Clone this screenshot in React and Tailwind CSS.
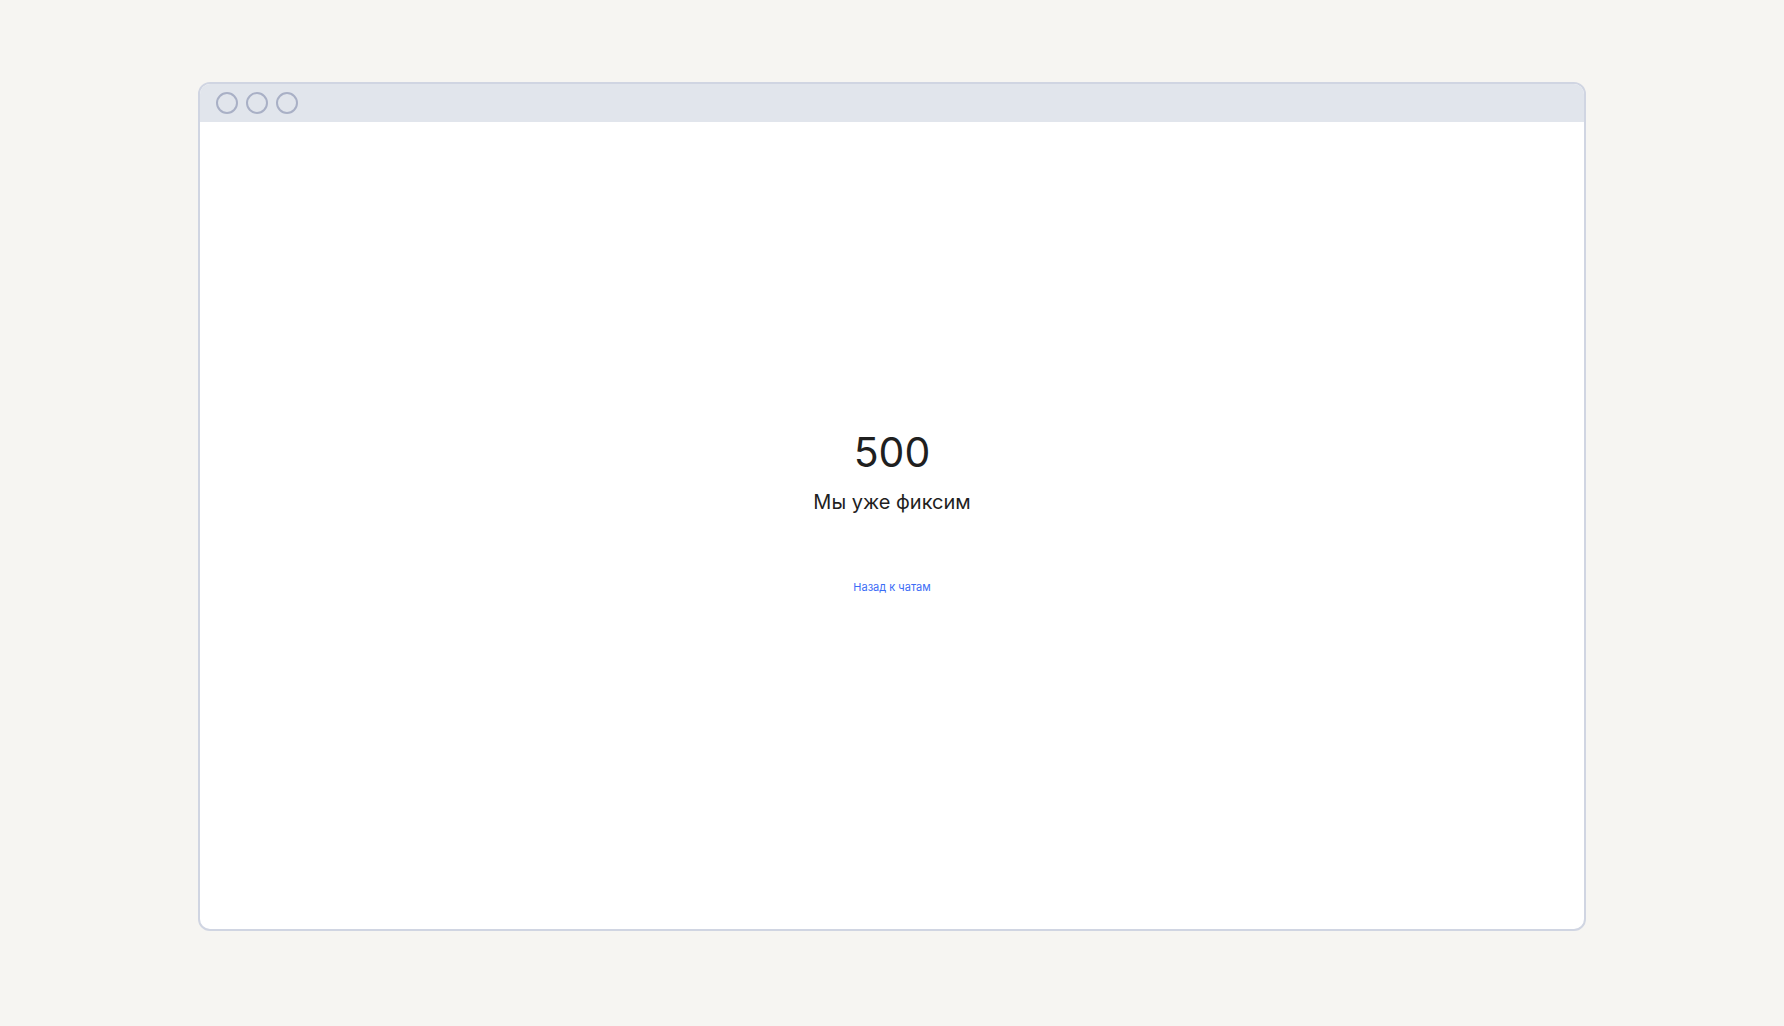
export default function App() {
  return (
    <div className="min-h-screen bg-[#f6f5f2] pt-[82px] pl-[198px]" style={{ fontFamily: 'Inter, "Noto Sans", sans-serif' }}>
      <div className="w-[1388px] h-[849px] rounded-[12px] border-2 border-[#d0d5e2] bg-white overflow-hidden flex flex-col">
        {/* title bar */}
        <div className="h-[38px] bg-[#e1e5ec] flex items-center gap-[8px] pl-[16px] shrink-0">
          <span className="w-[22px] h-[22px] rounded-full border-2 border-[#a9b0c6]" />
          <span className="w-[22px] h-[22px] rounded-full border-2 border-[#a9b0c6]" />
          <span className="w-[22px] h-[22px] rounded-full border-2 border-[#a9b0c6]" />
        </div>

        <div className="flex-1 flex flex-col items-center pt-[306px]">
          <h1 className="text-[41px] leading-[48px] font-normal text-[#1f1f1f]">500</h1>
          <p className="mt-[12px] text-[20px] leading-[28px] text-[#1f1f1f]">Мы уже фиксим</p>
          <a href="#" className="mt-[63px] text-[11px] leading-[16px] text-[#3b6cf6]">Назад к чатам</a>
        </div>
      </div>
    </div>
  );
}
